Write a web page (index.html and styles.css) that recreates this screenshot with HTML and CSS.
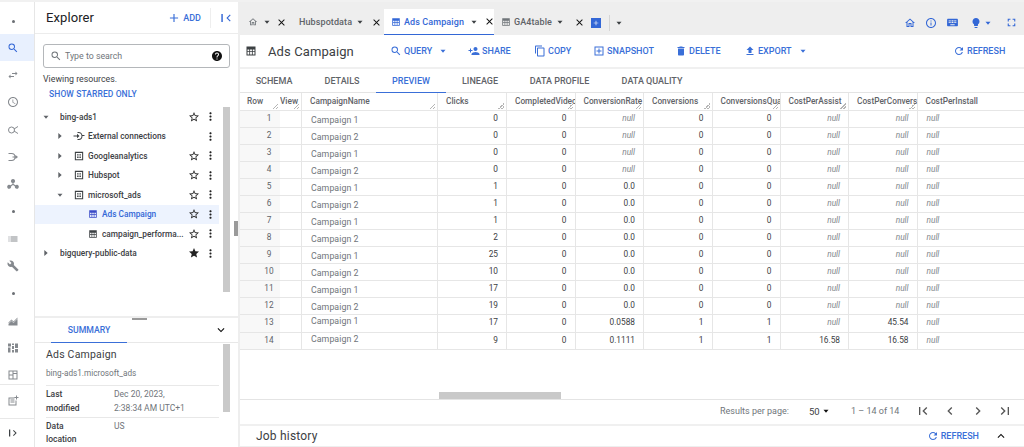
FILE: index.html
```html
<!DOCTYPE html>
<html lang="en">
<head>
<meta charset="utf-8">
<title>BigQuery - Ads Campaign</title>
<link rel="stylesheet" href="styles.css">
</head>
<body>
<svg class="defs" xmlns="http://www.w3.org/2000/svg">
<symbol id="search" viewBox="0 0 24 24"><path d="M15.5 14h-.79l-.28-.27A6.471 6.471 0 0 0 16 9.5 6.5 6.5 0 1 0 9.5 16c1.61 0 3.09-.59 4.23-1.57l.27.28v.79l5 4.99L20.49 19l-4.99-5zm-6 0C7.01 14 5 11.99 5 9.5S7.01 5 9.5 5 14 7.01 14 9.5 11.99 14 9.5 14z"/></symbol>
<symbol id="star" viewBox="0 0 24 24"><path d="M22 9.24l-7.19-.62L12 2 9.19 8.63 2 9.24l5.46 4.73L5.82 21 12 17.27 18.18 21l-1.63-7.03L22 9.24zM12 15.4l-3.76 2.27 1-4.28-3.32-2.88 4.38-.38L12 6.1l1.71 4.04 4.38.38-3.32 2.88 1 4.28L12 15.4z"/></symbol>
<symbol id="starf" viewBox="0 0 24 24"><path d="M12 17.27L18.18 21l-1.64-7.03L22 9.24l-7.19-.61L12 2 9.19 8.63 2 9.24l5.46 4.73L5.82 21z"/></symbol>
<symbol id="more" viewBox="0 0 24 24"><path d="M12 8c1.1 0 2-.9 2-2s-.9-2-2-2-2 .9-2 2 .9 2 2 2zm0 2c-1.1 0-2 .9-2 2s.9 2 2 2 2-.9 2-2-.9-2-2-2zm0 6c-1.1 0-2 .9-2 2s.9 2 2 2 2-.9 2-2-.9-2-2-2z"/></symbol>
<symbol id="close" viewBox="0 0 24 24"><path d="M19 6.41L17.59 5 12 10.59 6.41 5 5 6.41 10.59 12 5 17.59 6.41 19 12 13.41 17.59 19 19 17.59 13.41 12z"/></symbol>
<symbol id="refresh" viewBox="0 0 24 24"><path d="M17.65 6.35A7.958 7.958 0 0 0 12 4c-4.42 0-7.99 3.58-7.99 8s3.57 8 7.99 8c3.73 0 6.84-2.55 7.73-6h-2.08A5.99 5.99 0 0 1 12 18c-3.31 0-6-2.69-6-6s2.69-6 6-6c1.66 0 3.14.69 4.22 1.78L13 11h7V4l-2.35 2.35z"/></symbol>
<symbol id="delete" viewBox="0 0 24 24"><path d="M6 19c0 1.1.9 2 2 2h8c1.1 0 2-.9 2-2V7H6v12zM19 4h-3.5l-1-1h-5l-1 1H5v2h14V4z"/></symbol>
<symbol id="copy" viewBox="0 0 24 24"><path d="M16 1H4c-1.1 0-2 .9-2 2v14h2V3h12V1zm3 4H8c-1.1 0-2 .9-2 2v14c0 1.1.9 2 2 2h11c1.1 0 2-.9 2-2V7c0-1.1-.9-2-2-2zm0 16H8V7h11v14z"/></symbol>
<symbol id="share" viewBox="0 0 24 24"><path d="M15 12c2.21 0 4-1.79 4-4s-1.79-4-4-4-4 1.79-4 4 1.79 4 4 4zm-9-2V7H4v3H1v2h3v3h2v-3h3v-2H6zm9 4c-2.67 0-8 1.34-8 4v2h16v-2c0-2.66-5.33-4-8-4z"/></symbol>
<symbol id="export" viewBox="0 0 24 24"><path d="M9 16h6v-6h4l-7-7-7 7h4v6zm-4 2h14v2H5v-2z"/></symbol>
<symbol id="snapshot" viewBox="0 0 24 24"><path fill-rule="evenodd" d="M3 3h18v18H3zM5 5v14h14V5zM11 7h2v4h4v2h-4v4h-2v-4H7v-2h4z"/></symbol>
<symbol id="home" viewBox="0 0 24 24"><path d="M12 5.69l5 4.5V18h-2v-6H9v6H7v-7.81l5-4.5M12 3L2 12h3v8h6v-6h2v6h6v-8h3L12 3z"/></symbol>
<symbol id="info" viewBox="0 0 24 24"><path d="M11 7h2v2h-2zm0 4h2v6h-2zm1-9C6.48 2 2 6.48 2 12s4.48 10 10 10 10-4.48 10-10S17.52 2 12 2zm0 18c-4.41 0-8-3.59-8-8s3.59-8 8-8 8 3.59 8 8-3.59 8-8 8z"/></symbol>
<symbol id="keyboard" viewBox="0 0 24 24"><path d="M20 5H4c-1.1 0-1.99.9-1.99 2L2 17c0 1.1.9 2 2 2h16c1.1 0 2-.9 2-2V7c0-1.1-.9-2-2-2zm-9 3h2v2h-2V8zm0 3h2v2h-2v-2zM8 8h2v2H8V8zm0 3h2v2H8v-2zm-1 2H5v-2h2v2zm0-3H5V8h2v2zm9 7H8v-2h8v2zm0-4h-2v-2h2v2zm0-3h-2V8h2v2zm3 3h-2v-2h2v2zm0-3h-2V8h2v2z"/></symbol>
<symbol id="bulb" viewBox="0 0 24 24"><path d="M9 21c0 .55.45 1 1 1h4c.55 0 1-.45 1-1v-1H9v1zm3-19C8.14 2 5 5.14 5 9c0 2.38 1.19 4.47 3 5.74V17c0 .55.45 1 1 1h6c.55 0 1-.45 1-1v-2.26c1.81-1.27 3-3.36 3-5.74 0-3.86-3.14-7-7-7z"/></symbol>
<symbol id="full" viewBox="0 0 24 24"><path d="M7 14H5v5h5v-2H7v-3zm-2-4h2V7h3V5H5v5zm12 7h-3v2h5v-5h-2v3zM14 5v2h3v3h2V5h-5z"/></symbol>
<symbol id="clock" viewBox="0 0 24 24"><path d="M11.99 2C6.47 2 2 6.48 2 12s4.47 10 9.99 10C17.52 22 22 17.52 22 12S17.52 2 11.99 2zM12 20c-4.42 0-8-3.58-8-8s3.58-8 8-8 8 3.58 8 8-3.58 8-8 8zm.5-13H11v6l5.25 3.15.75-1.23-4.5-2.67z"/></symbol>
<symbol id="transfer" viewBox="0 0 24 24"><path d="M6.99 11L3 15l3.99 4v-3H14v-2H6.99v-3zM21 9l-3.99-4v3H10v2h7.01v3L21 9z"/></symbol>
<symbol id="wrench" viewBox="0 0 24 24"><path d="M22.7 19l-9.1-9.1c.9-2.3.4-5-1.5-6.9-2-2-5-2.4-7.4-1.3L9 6 6 9 1.6 4.7C.4 7.1.9 10.1 2.9 12.1c1.9 1.9 4.6 2.4 6.9 1.5l9.1 9.1c.4.4 1 .4 1.4 0l2.3-2.3c.5-.4.5-1.1.1-1.4z"/></symbol>
<symbol id="list" viewBox="0 0 24 24"><path d="M3 13h2v-2H3v2zm0 4h2v-2H3v2zm0-8h2V7H3v2zm4 4h14v-2H7v2zm0 4h14v-2H7v2zM7 7v2h14V7H7z"/></symbol>
<symbol id="down" viewBox="0 0 24 24"><path d="M16.59 8.59L12 13.17 7.41 8.59 6 10l6 6 6-6z"/></symbol>
<symbol id="up" viewBox="0 0 24 24"><path d="M12 8l-6 6 1.41 1.41L12 10.83l4.59 4.58L18 14z"/></symbol>
<symbol id="first" viewBox="0 0 24 24"><path d="M18.41 16.59L13.82 12l4.59-4.59L17 6l-6 6 6 6zM6 6h2v12H6z"/></symbol>
<symbol id="prev" viewBox="0 0 24 24"><path d="M15.41 7.41L14 6l-6 6 6 6 1.41-1.41L10.83 12z"/></symbol>
<symbol id="next" viewBox="0 0 24 24"><path d="M10 6L8.59 7.41 13.17 12l-4.58 4.59L10 18l6-6z"/></symbol>
<symbol id="last" viewBox="0 0 24 24"><path d="M5.59 7.41L10.18 12l-4.59 4.59L7 18l6-6-6-6zM16 6h2v12h-2z"/></symbol>
<symbol id="help" viewBox="0 0 24 24"><path d="M12 2C6.48 2 2 6.48 2 12s4.48 10 10 10 10-4.48 10-10S17.52 2 12 2zm1 17h-2v-2h2v2zm2.07-7.75l-.9.92C13.45 12.9 13 13.5 13 15h-2v-.5c0-1.1.45-2.1 1.17-2.83l1.24-1.26c.37-.36.59-.86.59-1.41 0-1.1-.9-2-2-2s-2 .9-2 2H8c0-2.21 1.79-4 4-4s4 1.79 4 4c0 .88-.36 1.68-.93 2.25z"/></symbol>
<symbol id="plus" viewBox="0 0 24 24"><path d="M19 13h-6v6h-2v-6H5v-2h6V5h2v6h6v2z"/></symbol>
<symbol id="caretd" viewBox="0 0 24 24"><path d="M6 9l6 7 6-7z"/></symbol>
<symbol id="caretr" viewBox="0 0 24 24"><path d="M8 5l8 7-8 7z"/></symbol>
<symbol id="table" viewBox="0 0 24 24"><path fill-rule="evenodd" d="M3 3h18v18H3zM5 9v3h3.5V9zM10.2 9v3h3.6V9zM15.5 9v3H19V9zM5 13.7V19h3.5v-5.3zM10.2 13.7V19h3.6v-5.3zM15.5 13.7V19H19v-5.3z"/></symbol>
<symbol id="dataset" viewBox="0 0 24 24"><path fill-rule="evenodd" d="M2 2h20v20H2zM4.500 4.500v15h15v-15zM7.500 7.500h3.500V11H7.500zM13 7.500h3.500V11H13zM7.500 13h3.500v3.500H7.500zM13 13h3.500v3.500H13z"/></symbol>
<symbol id="connect" viewBox="0 0 24 24"><path d="M11 4a8 8 0 0 1 7.700 6H23v2h-4.100A8 8 0 0 1 11 20H9v-2h2a6 6 0 0 0 0-12H9V4zM1 11h7V7.500l5 4.500-5 4.500V13H1z"/></symbol>
<symbol id="schedule" viewBox="0 0 24 24"><circle cx="9" cy="12" r="6" fill="none" stroke="currentColor" stroke-width="2"/><path d="M14 9l8-5v2l-8 5zM14 15l8 5v-2l-8-5z"/></symbol>
<symbol id="pipe" viewBox="0 0 24 24"><path d="M3 4h6a8 8 0 0 1 0 16H3v-2h6a6 6 0 0 0 0-12H3zM11 11h6V8l5 4-5 4v-3h-6z"/></symbol>
<symbol id="hub" viewBox="0 0 24 24"><path d="M12 2a4 4 0 0 1 1 7.900V12l4 2.500a4 4 0 1 1-1.200 1.800L12 14l-3.800 2.300a4 4 0 1 1-1.200-1.800L11 12V9.900A4 4 0 0 1 12 2z"/></symbol>
<symbol id="chart" viewBox="0 0 24 24"><path d="M3 15l6-6 4 4 8-8v2l-8 8-4-4-6 6zM3 21v-3l6-6 4 4 8-8v13z"/></symbol>
<symbol id="bi" viewBox="0 0 24 24"><path d="M2 3h6v6H2zM10 3h4v3h-4zM16 3h6v9h-6zM2 11h5v10H2zM10 8h4v6h-4zM16 14h6v7h-6zM10 16h4v5h-4z"/></symbol>
<symbol id="dash" viewBox="0 0 24 24"><path fill-rule="evenodd" d="M3 3h18v18H3zM5 5v6h6V5zM13 5v3h6V5zM13 10v9h6v-9zM5 13v6h6v-6z"/></symbol>
<symbol id="note" viewBox="0 0 24 24"><path d="M3 5h12v2H5v12h12V11h2v10H3zM7 9h8v2H7zM7 13h8v2H7zM18 1h2v3h3v2h-3v3h-2V6h-3V4h3z"/></symbol>
<symbol id="railopen" viewBox="0 0 24 24"><path d="M4 5h2.500v14H4zM12 7.400L13.400 6l6 6-6 6-1.400-1.400 4.600-4.600z"/></symbol>
<symbol id="railclose" viewBox="0 0 24 24"><path d="M4 5h2.500v14H4zM20 7.400L18.600 6l-6 6 6 6 1.400-1.400-4.600-4.600z"/></symbol>
</svg>

<div class="page">
<nav class="rail">
  <div class="rail-item rail-first"><span class="dot"></span></div>
  <div class="rail-item rail-on"><svg class="ic12"><use href="#search"/></svg></div>
  <div class="rail-item"><svg class="ic12"><use href="#transfer"/></svg></div>
  <div class="rail-item"><svg class="ic12"><use href="#clock"/></svg></div>
  <div class="rail-item"><svg class="ic12"><use href="#schedule"/></svg></div>
  <div class="rail-item"><svg class="ic12"><use href="#pipe"/></svg></div>
  <div class="rail-item"><svg class="ic12"><use href="#hub"/></svg></div>
  <div class="rail-item"><span class="dot"></span></div>
  <div class="rail-item"><svg class="ic12"><use href="#list"/></svg></div>
  <div class="rail-item"><svg class="ic12"><use href="#wrench"/></svg></div>
  <div class="rail-item"><span class="dot"></span></div>
  <div class="rail-item"><svg class="ic12"><use href="#chart"/></svg></div>
  <div class="rail-item"><svg class="ic12"><use href="#bi"/></svg></div>
  <div class="rail-item"><svg class="ic12"><use href="#dash"/></svg></div>
  <div class="rail-item rail-note"><svg class="ic12"><use href="#note"/></svg></div>
  <div class="rail-item rail-toggle"><svg class="ic12 dark"><use href="#railopen"/></svg></div>
</nav>

<aside class="explorer">
  <header class="ex-head">
    <h1 class="ex-title">Explorer</h1>
    <span class="ex-add"><svg class="ic14"><use href="#plus"/></svg>ADD</span>
    <span class="ex-collapse"><svg class="ic14"><use href="#railclose"/></svg></span>
  </header>
  <div class="ex-search">
    <svg class="ic12 gray"><use href="#search"/></svg>
    <span class="ex-search-text">Type to search</span>
    <svg class="ic12 black"><use href="#help"/></svg>
  </div>
  <p class="ex-view">Viewing resources.</p>
  <p class="ex-starred">SHOW STARRED ONLY</p>
  <div class="tree">
    <div class="tree-row"><svg class="caret l0"><use href="#caretd"/></svg><span class="t-name">bing-ads1</span><svg class="t-star"><use href="#star"/></svg><svg class="t-more"><use href="#more"/></svg></div>
    <div class="tree-row"><svg class="caret l1"><use href="#caretr"/></svg><svg class="t-ic t-wide"><use href="#connect"/></svg><span class="t-name">External connections</span><svg class="t-more"><use href="#more"/></svg></div>
    <div class="tree-row"><svg class="caret l1"><use href="#caretr"/></svg><svg class="t-ic"><use href="#dataset"/></svg><span class="t-name">Googleanalytics</span><svg class="t-star"><use href="#star"/></svg><svg class="t-more"><use href="#more"/></svg></div>
    <div class="tree-row"><svg class="caret l1"><use href="#caretr"/></svg><svg class="t-ic"><use href="#dataset"/></svg><span class="t-name">Hubspot</span><svg class="t-star"><use href="#star"/></svg><svg class="t-more"><use href="#more"/></svg></div>
    <div class="tree-row"><svg class="caret l1"><use href="#caretd"/></svg><svg class="t-ic"><use href="#dataset"/></svg><span class="t-name">microsoft_ads</span><svg class="t-star"><use href="#star"/></svg><svg class="t-more"><use href="#more"/></svg></div>
    <div class="tree-row tree-sel"><svg class="t-ic leaf"><use href="#table"/></svg><span class="t-name">Ads Campaign</span><svg class="t-star"><use href="#star"/></svg><svg class="t-more"><use href="#more"/></svg></div>
    <div class="tree-row"><svg class="t-ic leaf"><use href="#table"/></svg><span class="t-name">campaign_performa...</span><svg class="t-star"><use href="#star"/></svg><svg class="t-more"><use href="#more"/></svg></div>
    <div class="tree-row"><svg class="caret l0"><use href="#caretr"/></svg><span class="t-name">bigquery-public-data</span><svg class="t-star"><use href="#starf"/></svg><svg class="t-more"><use href="#more"/></svg></div>
    <span class="tree-scroll"></span>
  </div>
  <section class="summary">
    <span class="sum-grip"></span>
    <div class="sum-tabs">
      <span class="sum-tab">SUMMARY</span>
      <svg class="ic14 black"><use href="#down"/></svg>
    </div>
    <div class="sum-body">
      <h2 class="sum-title">Ads Campaign</h2>
      <p class="sum-path">bing-ads1.microsoft_ads</p>
      <dl class="sum-list">
        <div class="sum-row"><dt>Last modified</dt><dd>Dec 20, 2023,<br>2:38:34 AM UTC+1</dd></div>
        <div class="sum-row"><dt>Data location</dt><dd>US</dd></div>
      </dl>
      <span class="sum-scroll"></span>
    </div>
  </section>
  <span class="split-handle"></span>
</aside>

<main class="main">
  <div class="tabbar">
    <div class="tab tab-home"><svg class="ic10 gray"><use href="#home"/></svg><svg class="ic10 dark"><use href="#caretd"/></svg><svg class="ic11 black"><use href="#close"/></svg></div>
    <div class="tab tab-hub"><span>Hubspotdata</span><svg class="ic10 dark"><use href="#caretd"/></svg><svg class="ic11 black"><use href="#close"/></svg></div>
    <div class="tab tab-on"><svg class="ic10 blue"><use href="#table"/></svg><span>Ads Campaign</span><svg class="ic10 dark"><use href="#caretd"/></svg><svg class="ic11 black"><use href="#close"/></svg></div>
    <div class="tab tab-ga"><svg class="ic10 gray"><use href="#table"/></svg><span>GA4table</span><svg class="ic10 dark"><use href="#caretd"/></svg><svg class="ic11 black"><use href="#close"/></svg></div>
    <span class="tab-new"><svg class="ic8"><use href="#plus"/></svg></span>
    <span class="tab-sep"></span>
    <svg class="ic10 dark"><use href="#caretd"/></svg>
    <div class="tab-tools">
      <svg class="ic12"><use href="#home"/></svg>
      <svg class="ic12"><use href="#info"/></svg>
      <svg class="ic13"><use href="#keyboard"/></svg>
      <span class="tool-bulb"><svg class="ic12"><use href="#bulb"/></svg><svg class="ic10"><use href="#caretd"/></svg></span>
      <svg class="ic13"><use href="#full"/></svg>
    </div>
  </div>
  <div class="toolbar">
    <svg class="ic12 dark tb-table"><use href="#table"/></svg>
    <h2 class="tb-title">Ads Campaign</h2>
    <span class="btn b-query"><svg class="ic12"><use href="#search"/></svg>QUERY<svg class="ic10"><use href="#caretd"/></svg></span>
    <span class="btn b-share"><svg class="ic12"><use href="#share"/></svg>SHARE</span>
    <span class="btn b-copy"><svg class="ic12"><use href="#copy"/></svg>COPY</span>
    <span class="btn b-snap"><svg class="ic12"><use href="#snapshot"/></svg>SNAPSHOT</span>
    <span class="btn b-del"><svg class="ic12"><use href="#delete"/></svg>DELETE</span>
    <span class="btn b-exp"><svg class="ic12"><use href="#export"/></svg>EXPORT<svg class="ic10"><use href="#caretd"/></svg></span>
    <span class="btn b-ref"><svg class="ic12"><use href="#refresh"/></svg>REFRESH</span>
  </div>
  <div class="subtabs">
    <span class="st st1">SCHEMA</span>
    <span class="st st2">DETAILS</span>
    <span class="st st3">PREVIEW</span>
    <span class="st st4">LINEAGE</span>
    <span class="st st5">DATA PROFILE</span>
    <span class="st st6">DATA QUALITY</span>
  </div>
  <div class="grid-wrap">
    <div class="grow ghead">
      <span>Row</span><span class="gview">View</span><span>CampaignName</span><span>Clicks</span><span class="clip">CompletedVideo</span><span class="clip">ConversionRate</span><span>Conversions</span><span class="clip">ConversionsQua</span><span>CostPerAssist</span><span class="clip">CostPerConvers</span><span class="nograb">CostPerInstall</span>
    </div>
    <div class="grow"><span class="n">1</span><span class="e"></span><span class="c">Campaign 1</span><span>0</span><span>0</span><span class="i">null</span><span>0</span><span>0</span><span class="i">null</span><span class="i">null</span><span class="il">null</span></div>
    <div class="grow"><span class="n">2</span><span class="e"></span><span class="c">Campaign 2</span><span>0</span><span>0</span><span class="i">null</span><span>0</span><span>0</span><span class="i">null</span><span class="i">null</span><span class="il">null</span></div>
    <div class="grow"><span class="n">3</span><span class="e"></span><span class="c">Campaign 1</span><span>0</span><span>0</span><span class="i">null</span><span>0</span><span>0</span><span class="i">null</span><span class="i">null</span><span class="il">null</span></div>
    <div class="grow"><span class="n">4</span><span class="e"></span><span class="c">Campaign 2</span><span>0</span><span>0</span><span class="i">null</span><span>0</span><span>0</span><span class="i">null</span><span class="i">null</span><span class="il">null</span></div>
    <div class="grow"><span class="n">5</span><span class="e"></span><span class="c">Campaign 1</span><span>1</span><span>0</span><span>0.0</span><span>0</span><span>0</span><span class="i">null</span><span class="i">null</span><span class="il">null</span></div>
    <div class="grow"><span class="n">6</span><span class="e"></span><span class="c">Campaign 2</span><span>1</span><span>0</span><span>0.0</span><span>0</span><span>0</span><span class="i">null</span><span class="i">null</span><span class="il">null</span></div>
    <div class="grow"><span class="n">7</span><span class="e"></span><span class="c">Campaign 1</span><span>1</span><span>0</span><span>0.0</span><span>0</span><span>0</span><span class="i">null</span><span class="i">null</span><span class="il">null</span></div>
    <div class="grow"><span class="n">8</span><span class="e"></span><span class="c">Campaign 2</span><span>2</span><span>0</span><span>0.0</span><span>0</span><span>0</span><span class="i">null</span><span class="i">null</span><span class="il">null</span></div>
    <div class="grow"><span class="n">9</span><span class="e"></span><span class="c">Campaign 1</span><span>25</span><span>0</span><span>0.0</span><span>0</span><span>0</span><span class="i">null</span><span class="i">null</span><span class="il">null</span></div>
    <div class="grow"><span class="n">10</span><span class="e"></span><span class="c">Campaign 2</span><span>10</span><span>0</span><span>0.0</span><span>0</span><span>0</span><span class="i">null</span><span class="i">null</span><span class="il">null</span></div>
    <div class="grow"><span class="n">11</span><span class="e"></span><span class="c">Campaign 1</span><span>17</span><span>0</span><span>0.0</span><span>0</span><span>0</span><span class="i">null</span><span class="i">null</span><span class="il">null</span></div>
    <div class="grow"><span class="n">12</span><span class="e"></span><span class="c">Campaign 2</span><span>19</span><span>0</span><span>0.0</span><span>0</span><span>0</span><span class="i">null</span><span class="i">null</span><span class="il">null</span></div>
    <div class="grow"><span class="n">13</span><span class="e"></span><span class="c cup">Campaign 1</span><span>17</span><span>0</span><span>0.0588</span><span>1</span><span>1</span><span class="i">null</span><span>45.54</span><span class="il">null</span></div>
    <div class="grow"><span class="n">14</span><span class="e"></span><span class="c cup">Campaign 2</span><span>9</span><span>0</span><span>0.1111</span><span>1</span><span>1</span><span>16.58</span><span>16.58</span><span class="il">null</span></div>
    <span class="hscroll"></span>
  </div>
  <div class="pager">
    <span class="pg-label">Results per page:</span>
    <span class="pg-size">50<svg class="ic10 black"><use href="#caretd"/></svg></span>
    <span class="pg-range">1 – 14 of 14</span>
    <span class="pg-nav"><svg class="ic16"><use href="#first"/></svg><svg class="ic16"><use href="#prev"/></svg><svg class="ic16"><use href="#next"/></svg><svg class="ic16"><use href="#last"/></svg></span>
  </div>
  <div class="jobs">
    <h2 class="jobs-title">Job history</h2>
    <span class="btn b-jobref"><svg class="ic12"><use href="#refresh"/></svg>REFRESH</span>
    <svg class="ic14 black"><use href="#up"/></svg>
  </div>
</main>
</div>
</body>
</html>
```

FILE: styles.css
```css
* { box-sizing: border-box; }
html, body { margin: 0; height: 100%; overflow: hidden; }
body { font-family: Roboto, "Liberation Sans", sans-serif; font-size: 9px; color: #3c4043; background: #f1f1f1; }
.defs { display: none; }
h1, h2, p, dl, dd { margin: 0; font-weight: 400; }

svg { fill: currentColor; flex: none; display: block; }
.ic8 { width: 8px; height: 8px; }
.ic10 { width: 10px; height: 10px; }
.ic11 { width: 11px; height: 11px; }
.ic12 { width: 12px; height: 12px; }
.ic13 { width: 13px; height: 13px; }
.ic14 { width: 14px; height: 14px; }
.ic16 { width: 16px; height: 16px; }
.gray { color: #70757a; }
.dark { color: #3c4043; }
.black { color: #111; }
.blue { color: #3367d6; }

.page { display: flex; height: 447px; padding-top: 2px; }

/* rail */
.rail { width: 35px; flex: none; background: #fff; border-right: 1px solid #e6e6e6; padding-top: 6px; display: flex; flex-direction: column; color: #85898e; }
.rail-item { height: 27.300px; flex: none; display: flex; align-items: center; justify-content: center; padding-right: 8px; }
.rail-first { height: 26px; }
.rail-on { background: #e8f0fe; color: #3367d6; }
.rail-note { border-top: 1px solid #e8e8e8; height: 34px; margin-top: -5px; }
.rail-toggle { border-top: 1px solid #e8e8e8; height: 30px; }
.dot { width: 3px; height: 3px; border-radius: 50%; background: #6b6f74; }

/* explorer */
.explorer { width: 205px; flex: none; background: #fff; border-right: 2px solid #eee; display: flex; flex-direction: column; position: relative; }
.ex-head { height: 32px; flex: none; display: flex; align-items: center; padding-left: 11px; border-bottom: 1px solid #ececec; }
.ex-title { font-size: 13px; color: #202124; flex: 1; letter-spacing: .1px; }
.ex-add { display: flex; align-items: center; gap: 2px; color: #3a6fd8; font-size: 9px; font-weight: 500; padding-right: 9px; border-right: 1px solid #eee; height: 20px; }
.ex-collapse { width: 27px; padding-left: 3px; display: flex; justify-content: center; color: #3367d6; }
.ex-search { margin: 10px 8px 0; height: 24px; border: 1px solid #b4b7ba; border-radius: 3px; display: flex; align-items: center; padding: 0 6px; gap: 3px; }
.ex-search-text { flex: 1; font-size: 8.800px; color: #70757a; }
.ex-view { margin: 5px 0 0 8px; font-size: 8.800px; line-height: 12px; color: #3c4043; }
.ex-starred { margin: 3px 0 0 14px; font-size: 8.500px; line-height: 12px; font-weight: 500; color: #3a6fd8; letter-spacing: .1px; }

.tree { margin-top: 7px; height: 208px; position: relative; flex: none; }
.tree-row { height: 19.500px; width: 184px; display: flex; align-items: center; position: relative; padding-right: 2px; }
.tree-sel { background: #edf3fe; color: #3367d6; }
.caret { width: 10px; height: 10px; color: #5f6368; }
.caret.l0 { margin: 0 9px 0 6px; }
.caret.l1 { margin: 0 9px 0 20px; }
.t-ic { width: 10px; height: 10px; margin-right: 4px; color: #3c4043; }
.t-ic.t-wide { width: 12px; height: 12px; margin: 0 3px 0 -1px; }
.t-ic.leaf { margin: 0 4px 0 53px; }
.tree-sel .t-ic { color: #3949c6; }
.t-name { flex: 1; min-width: 0; font-size: 8.300px; font-weight: 500; white-space: nowrap; }
.t-star { width: 12px; height: 12px; color: #222; margin-right: 4px; }
.t-more { width: 13px; height: 13px; color: #222; }
.tree-scroll { position: absolute; left: 188px; top: 0; width: 7px; height: 185px; background: #c9c9c9; }

.summary { position: absolute; left: 0; right: 0; top: 314px; bottom: 0; background: #fff; border-top: 2px solid #eee; }
.sum-grip { position: absolute; left: 97px; top: 0; width: 15px; height: 2px; background: #9a9a9a; }
.sum-tabs { height: 25px; border-bottom: 1px solid #e8e8e8; display: flex; align-items: center; justify-content: space-between; padding: 0 10px 0 16px; }
.sum-tab { width: 76px; height: 25px; text-align: center; line-height: 25px; color: #3a6fd8; font-size: 8.700px; font-weight: 500; border-bottom: 1px solid #3a6fd8; }
.sum-body { padding: 4px 18px 0 11px; position: relative; }
.sum-title { font-size: 10.500px; line-height: 16px; color: #3c4043; letter-spacing: .2px; }
.sum-path { font-size: 8.200px; line-height: 12px; margin: 4px 0 6px; color: #70757a; }
.sum-list { border-top: 1px solid #e8e8e8; margin-right: 1px; }
.sum-row { display: flex; border-bottom: 1px solid #e8e8e8; padding: 2px 0 1.500px; line-height: 13.500px; font-size: 8.500px; }
.sum-row dt { width: 68px; color: #3c4043; font-weight: 500; padding-right: 20px; }
.sum-row dd { flex: 1; color: #70757a; white-space: nowrap; }
.sum-scroll { position: absolute; left: 188px; top: 1px; width: 7px; height: 68px; background: #c9c9c9; }
.split-handle { position: absolute; right: 0; top: 219px; width: 4px; height: 15px; background: #9a9a9a; }

/* main */
.main { flex: 1; min-width: 0; display: flex; flex-direction: column; background: #fff; }
.tabbar { height: 33px; flex: none; background: #eee; display: flex; align-items: flex-end; color: #3c4043; position: relative; }
.tab { height: 26px; display: flex; align-items: center; font-size: 9px; letter-spacing: .1px; color: #5f6368; font-weight: 500; white-space: nowrap; }
.tab-home { width: 54px; padding-left: 8px; gap: 4px; }
.tab-hub { width: 90px; padding-left: 5px; }
.tab-hub span { margin-right: 3px; }
.tab-hub .ic11, .tab-ga .ic11 { margin-left: 6px; }
.tab-on { width: 110px; background: #fff; color: #3367d6; padding-left: 7px; gap: 3px; border-bottom: 1px solid #3367d6; }
.tab-on .ic10.dark { margin-left: 2px; }
.tab-on .ic11 { margin-left: 2px; }
.tab-ga { width: 88px; padding-left: 7px; gap: 3px; }
.tab-new { width: 10px; height: 10px; background: #3367d6; color: #fff; margin: 0 4px 7px 9px; display: flex; align-items: center; justify-content: center; }
.tab-sep { width: 1px; height: 16px; background: #d5d5d5; margin: 0 2px 4px 4px; }
.tabbar > .ic10 { margin-bottom: 7px; margin-left: 2px; }
.tab-tools { margin-left: auto; display: flex; align-items: center; gap: 9px; padding: 0 6px 6px 0; color: #3367d6; }
.tool-bulb { display: flex; align-items: center; gap: 1px; margin: 0 3px 0 2px; }

.toolbar { height: 34px; flex: none; display: flex; align-items: center; border-bottom: 2px solid #f0f0f0; color: #3a6fd8; }
.tb-table { margin-left: 5px; }
.tb-title { width: 105px; margin-left: 11px; font-size: 13px; color: #3c4043; letter-spacing: .1px; }
.btn { display: flex; align-items: center; gap: 2px; font-size: 9px; font-weight: 500; color: #3a6fd8; white-space: nowrap; }
.b-query { width: 78px; margin-left: 17px; }
.b-query .ic10, .b-exp .ic10 { margin-left: 4px; }
.b-share { width: 66px; }
.b-copy { width: 59px; }
.b-snap { width: 82px; }
.b-del { width: 69px; }
.b-exp { flex: 1; }
.b-ref { width: 71px; }
.b-jobref { margin-right: 15px; }

.subtabs { height: 24px; flex: none; display: flex; font-size: 9px; font-weight: 500; color: #5f6368; border-bottom: 1px solid #e4e4e4; }
.st { height: 24px; line-height: 25px; text-align: center; flex: none; }
.st1 { width: 68px; }
.st2 { width: 68px; }
.st3 { width: 70px; color: #3a6fd8; border-bottom: 1px solid #3a6fd8; }
.st4 { width: 68px; }
.st5 { width: 91px; }
.st6 { width: 94px; }

.grid-wrap { flex: 1; position: relative; border-bottom: 1px solid #e4e4e4; overflow: hidden; }
.grow { display: grid; grid-template-columns: 40px 22px 136px 69px 68.500px 68.500px 68.500px 68px 68.500px 68.500px 1fr; height: 17.080px; }
.grow > span { border-right: 1px solid #e6e6e6; border-bottom: 1px solid #e6e6e6; padding: 0 8px 0 4px; text-align: right; line-height: 15.500px; font-size: 8.300px; color: #3c4043; overflow: hidden; white-space: nowrap; }
.grow > span:last-child { border-right: 0; }
.grow > .n { background: #f8f8f8; text-align: center; padding: 0 0 0 18px; border-right: 0; color: #5f6368; }
.grow > .e { text-align: left; }
.grow > .c { text-align: left; padding: 2px 0 0 9px; font-size: 8.800px; color: #70757a; letter-spacing: .05px; line-height: 15px; }
.grow > .cup { padding-top: 0; line-height: 13px; }
.grow > .i { color: #80868b; font-style: italic; }
.grow > .il { color: #80868b; font-style: italic; text-align: left; padding-left: 9px; }
.ghead { height: 17.500px; }
.ghead > span { height: 17.500px; padding: 0 0 0 8px; text-align: left; line-height: 16px; font-weight: 500; color: #5f6368; background: linear-gradient(135deg, transparent 50%, #b5b5b5 50%, #b5b5b5 60%, transparent 60%, transparent 75%, #b5b5b5 75%, #b5b5b5 85%, transparent 85%) no-repeat right 2px bottom 1px / 6px 6px; }
.ghead > span:first-child { padding-left: 7px; border-right: 0; }
.ghead > .gview { padding-left: 0; }
.ghead > .nograb { background: none; }
.hscroll { position: absolute; left: 199px; bottom: 0; width: 122px; height: 7px; background: #c9c9c9; }

.pager { height: 22px; flex: none; display: flex; align-items: center; font-size: 9px; color: #70757a; padding-left: 480px; }
.pg-label { width: 89px; }
.pg-size { width: 42px; display: flex; align-items: center; gap: 1px; color: #3c4043; font-size: 9.500px; }
.pg-range { width: 64px; }
.pg-nav { display: flex; gap: 11.400px; color: #555; }

.jobs { height: 23px; flex: none; margin-top: 2px; border-top: 2px solid #f0f0f0; border-bottom: 1px solid #eee; display: flex; align-items: center; padding: 0 16px; }
.jobs-title { flex: 1; font-size: 12px; color: #3c4043; letter-spacing: .2px; }
```
